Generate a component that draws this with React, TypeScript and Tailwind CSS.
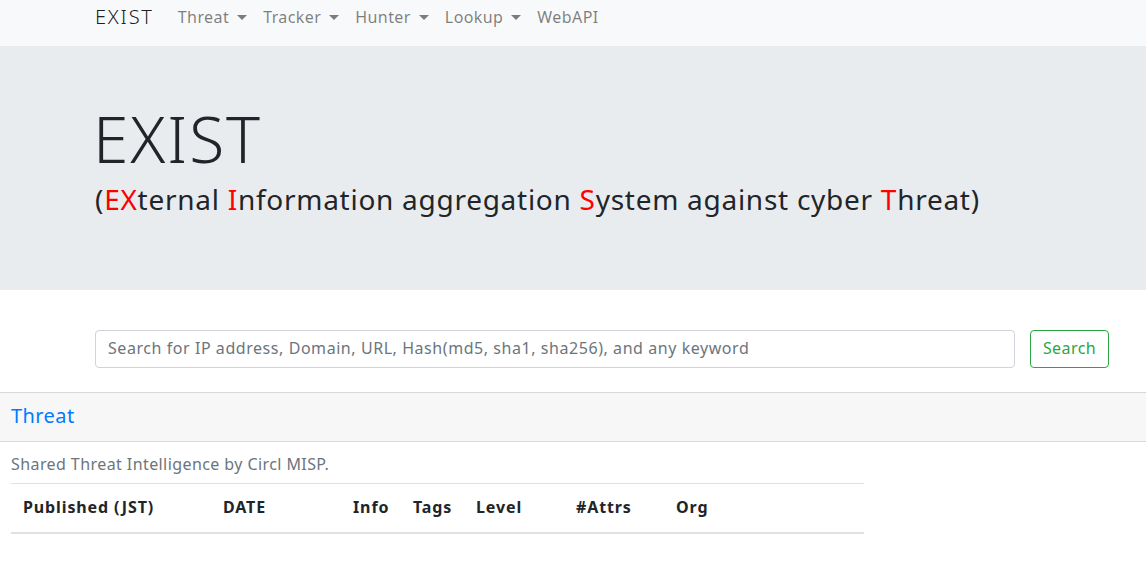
function Item({ t, caret = true }: { t: string; caret?: boolean }) {
  return (
    <a className="flex items-center px-2 text-[rgba(0,0,0,0.5)] text-base tracking-[0.026em]">
      {t}
      {caret && <span className="ml-2 border-x-[5px] border-t-[5px] border-x-transparent border-t-[rgba(0,0,0,0.5)]" />}
    </a>
  );
}
const R = ({ c }: { c: string }) => <span className="text-[#ff0000]">{c}</span>;
const th = "pl-3 pb-[2px] font-bold tracking-[0.055em]";
export default function App() {
  return (
    <div className="h-[566px] overflow-hidden bg-white text-[#212529] font-['Noto_Sans',sans-serif] tracking-[0.026em]">
      <nav className="h-[46px] bg-[#f8f9fa] pl-[95px] flex items-center pb-[12px]">
        <span className="text-xl mr-4 text-[rgba(0,0,0,0.9)] font-light tracking-[0.09em]">EXIST</span>
        <Item t="Threat" /><Item t="Tracker" /><Item t="Hunter" /><Item t="Lookup" /><Item t="WebAPI" caret={false} />
      </nav>
      <header className="h-[244px] bg-[#e9ecef] pl-[95px] pt-[55px]">
        <h1 className="text-[64px] font-light leading-[1.2] tracking-[0.03em] -ml-[2px]">EXIST</h1>
        <p className="text-[28px] leading-[1.2] mt-[5px] tracking-[0.026em]">(<R c="EX" />ternal <R c="I" />nformation aggregation <R c="S" />ystem against cyber <R c="T" />hreat)</p>
      </header>
      <div className="flex pl-[95px] pr-[37px] pt-10 gap-[15px]">
        <input className="flex-1 h-[38px] border border-[#ced4da] rounded px-3 pb-[2px] tracking-[0.035em] placeholder:text-[#6c757d]" placeholder="Search for IP address, Domain, URL, Hash(md5, sha1, sha256), and any keyword" />
        <button className="h-[38px] w-[79px] pb-[2px] border border-[#28a745] text-[#28a745] rounded">Search</button>
      </div>
      <div className="mt-[24px] h-[50px] pb-[2px] border-y border-[rgba(0,0,0,0.125)] bg-[rgba(0,0,0,0.03)] px-[11px] flex items-center text-[20px] text-[#007bff]">Threat</div>
      <div className="px-[11px] pt-[10px]">
        <p className="text-[#6c757d] leading-6 mb-[7px]">Shared Threat Intelligence by Circl MISP.</p>
        <table className="w-[853px] border-t border-[#dee2e6] border-b-2">
          <thead><tr className="h-[49px] text-left">
            <th className={`w-[200px] ${th}`}>Published (JST)</th><th className={`w-[130px] ${th}`}>DATE</th><th className={`w-[60px] ${th}`}>Info</th><th className={`w-[63px] ${th}`}>Tags</th><th className={`w-[100px] ${th}`}>Level</th><th className={`w-[100px] ${th}`}>#Attrs</th><th className={th}>Org</th>
          </tr></thead>
        </table>
      </div>
    </div>
  );
}
